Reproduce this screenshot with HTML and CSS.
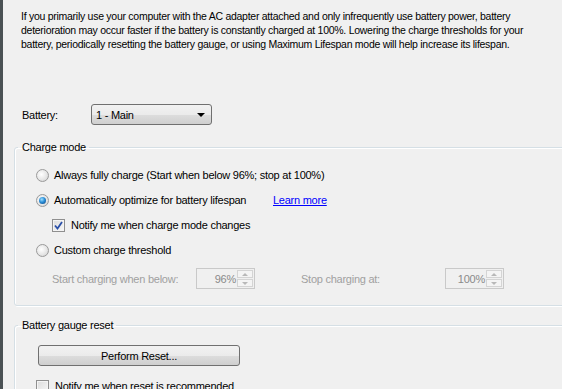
FILE: index.html
```html
<!DOCTYPE html>
<html lang="en">
<head>
    <meta charset="UTF-8">
    <title>Battery Settings</title>
    <link rel="stylesheet" href="styles.css">
</head>
<body>
    <div class="window">
        <p class="intro">If you primarily use your computer with the AC adapter attached and only infrequently use battery power, battery deterioration may occur faster if the battery is constantly charged at 100%. Lowering the charge thresholds for your battery, periodically resetting the battery gauge, or using Maximum Lifespan mode will help increase its lifespan.</p>

        <div class="battery-row">
            <span class="label">Battery:</span>
            <div class="select">
                <span>1 - Main</span>
                <span class="arrow"></span>
            </div>
        </div>

        <fieldset class="group charge-group">
            <legend>Charge mode</legend>

            <div class="option">
                <span class="radio"></span>
                <span>Always fully charge (Start when below 96%; stop at 100%)</span>
            </div>
            <div class="option">
                <span class="radio checked"></span>
                <span class="option-text">Automatically optimize for battery lifespan</span>
                <a class="link" href="#">Learn more</a>
            </div>
            <div class="option sub">
                <span class="check checked">
                    <svg width="9" height="9" viewBox="0 0 9 9"><path d="M1 4.5 L3.5 7.5 L8 1" fill="none" stroke="#2a4fa8" stroke-width="1.8"/></svg>
                </span>
                <span>Notify me when charge mode changes</span>
            </div>
            <div class="option">
                <span class="radio"></span>
                <span>Custom charge threshold</span>
            </div>
            <div class="threshold-row">
                <span class="dim start-label">Start charging when below:</span>
                <div class="spin">
                    <span class="spin-value">96%</span>
                    <span class="spin-btns"><span class="up"></span><span class="down"></span></span>
                </div>
                <span class="dim stop-label">Stop charging at:</span>
                <div class="spin">
                    <span class="spin-value">100%</span>
                    <span class="spin-btns"><span class="up"></span><span class="down"></span></span>
                </div>
            </div>
        </fieldset>

        <fieldset class="group gauge-group">
            <legend>Battery gauge reset</legend>
            <button class="button" type="button">Perform Reset...</button>
            <div class="option gauge-check">
                <span class="check"></span>
                <span>Notify me when reset is recommended</span>
            </div>
        </fieldset>
    </div>
</body>
</html>
```

FILE: styles.css
```css
* {
    margin: 0;
    padding: 0;
    box-sizing: border-box;
}

body {
    background: #f0f0f0;
    color: #000000;
    font-family: 'Liberation Sans', Arial, sans-serif;
    font-size: 11px;
    letter-spacing: -0.25px;
    width: 562px;
    height: 389px;
    overflow: hidden;
}

.window {
    height: 389px;
    border-left: 3px solid #4a5154;
    padding: 9px 0 0 11px;
    background: #f0f0f0;
}

.intro {
    font-size: 10.5px;
    letter-spacing: -0.27px;
    line-height: 14px;
    padding-left: 7px;
    width: 530px;
}

.battery-row {
    display: flex;
    align-items: center;
    margin-top: 53px;
    padding-left: 8px;
    height: 21px;
}

.label {
    width: 69px;
}

.select {
    width: 121px;
    height: 21px;
    border: 1px solid #707070;
    border-radius: 3px;
    background: linear-gradient(#f2f2f2 0%, #ebebeb 50%, #dddddd 51%, #cfcfcf 100%);
    display: flex;
    align-items: center;
    justify-content: space-between;
    padding: 0 6px 0 4px;
}

.arrow {
    width: 0;
    height: 0;
    border-left: 4px solid transparent;
    border-right: 4px solid transparent;
    border-top: 4px solid #000000;
}

.group {
    border: 1px solid #d5dfe5;
    border-radius: 3px;
    box-shadow: inset 1px 1px 0 #ffffff, 1px 1px 0 #ffffff;
    width: 600px;
    padding: 0 0 0 21px;
}

.group legend {
    padding: 0 3px 0 4px;
    margin-left: -18px;
    line-height: 14px;
}

.charge-group {
    margin-top: 15px;
    height: 166px;
    padding-top: 14px;
}

.option {
    display: flex;
    align-items: center;
    height: 14px;
    margin-bottom: 11px;
}

.option-text {
    width: 219px;
}

.radio {
    width: 13px;
    height: 13px;
    border-radius: 50%;
    border: 1px solid #9a9a9a;
    background: radial-gradient(circle at 40% 40%, #ffffff 0%, #e4e4e4 60%, #c8c8c8 100%);
    margin-right: 5px;
    flex-shrink: 0;
    position: relative;
}

.radio.checked::after {
    content: '';
    position: absolute;
    left: 2px;
    top: 2px;
    width: 7px;
    height: 7px;
    border-radius: 50%;
    background: radial-gradient(circle at 40% 35%, #9fe0ff 0%, #2a8ed8 45%, #0b3f7a 100%);
}

.link {
    color: #0000ff;
    text-decoration: underline;
}

.option.sub {
    padding-left: 16px;
    margin-top: 2px;
}

.check {
    width: 13px;
    height: 13px;
    border: 1px solid #8f8f8f;
    background: linear-gradient(135deg, #dcdcdc, #f7f7f7);
    box-shadow: inset 0 0 0 1px #f4f4f4;
    margin-right: 6px;
    flex-shrink: 0;
    display: flex;
    align-items: center;
    justify-content: center;
}

.dim {
    color: #a0a0a0;
}

.threshold-row {
    display: flex;
    align-items: center;
    padding-left: 16px;
    margin-top: 5px;
}

.start-label {
    width: 144px;
}

.stop-label {
    width: 144px;
    margin-left: 46px;
}

.spin {
    display: flex;
    align-items: center;
    height: 21px;
    border: 1px solid #c9c9c9;
    padding: 1px;
    width: 59px;
    justify-content: flex-end;
}

.spin-value {
    color: #8a8a8a;
    padding-right: 1px;
}

.spin-btns {
    display: flex;
    flex-direction: column;
    width: 16px;
    height: 17px;
    gap: 1px;
}

.spin-btns span {
    flex: 1;
    border: 1px solid #d4d4d4;
    background: #f4f4f4;
    position: relative;
}

.spin-btns .up::after,
.spin-btns .down::after {
    content: '';
    position: absolute;
    left: 4px;
    top: 2px;
    border-left: 3px solid transparent;
    border-right: 3px solid transparent;
}

.spin-btns .up::after {
    border-bottom: 3px solid #b8b8b8;
}

.spin-btns .down::after {
    border-top: 3px solid #b8b8b8;
}

.gauge-group {
    margin-top: 12px;
    height: 80px;
    padding-top: 13px;
}

.button {
    display: block;
    width: 202px;
    height: 21px;
    margin-left: 2px;
    border: 1px solid #707070;
    border-radius: 3px;
    background: linear-gradient(#f2f2f2 0%, #ebebeb 50%, #dddddd 51%, #cfcfcf 100%);
    font-family: 'Liberation Sans', Arial, sans-serif;
    font-size: 11px;
    letter-spacing: -0.25px;
    color: #000000;
}

.gauge-check {
    margin-top: 13px;
    margin-left: 0;
}
```
